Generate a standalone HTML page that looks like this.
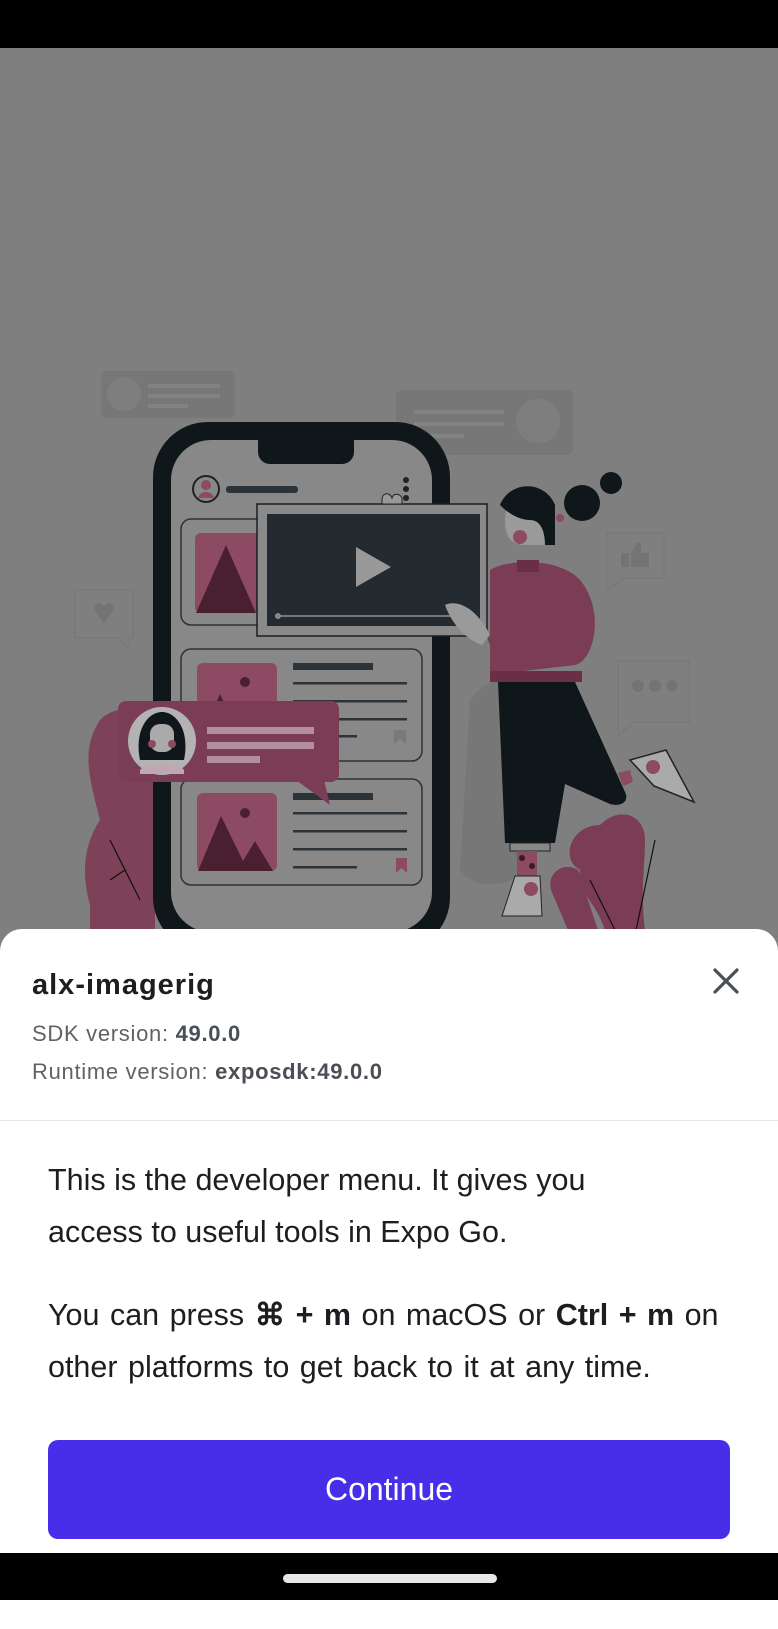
<!DOCTYPE html>
<html><head><meta charset="utf-8"><style>
*{margin:0;padding:0;box-sizing:border-box}
body{width:778px;height:1600px;position:relative;overflow:hidden;background:#7f7f7f;font-family:"Liberation Sans",Arial,sans-serif}
.top{position:absolute;left:0;top:0;width:778px;height:48px;background:#000}
svg.ill{position:absolute;left:0;top:0}
.sheet{position:absolute;left:0;top:929px;width:778px;height:700px;background:#fff;border-radius:22px 22px 0 0}
.title{position:absolute;left:32px;top:40px;font-size:29px;letter-spacing:1px;font-weight:bold;color:#1c1e21}
.sdk{position:absolute;left:32px;font-size:22px;letter-spacing:.7px;color:#5f6368}
.sdk b{color:#4a4e55}
.close{position:absolute;left:712px;top:38px}
.div{position:absolute;left:0;top:191px;width:778px;height:1px;background:#e4e6e9}
.p{position:absolute;left:48px;font-size:30.5px;line-height:52px;color:#1c1e21}
.btn{position:absolute;left:48px;top:511px;width:682px;height:99px;background:#482ee9;border-radius:10px;color:#fff;font-size:32px;text-align:center;line-height:99px}
.bot{position:absolute;left:0;top:1553px;width:778px;height:47px;background:#000}
.home{position:absolute;left:283px;top:1574px;width:214px;height:9px;border-radius:5px;background:#e6e6e6}
</style></head><body>
<div class="top"></div>
<svg class="ill" width="778" height="960" viewBox="0 0 778 960">
<rect x="101" y="371" width="134" height="47" rx="6" fill="#777"/>
<circle cx="124" cy="394" r="17" fill="#7e7e7e"/>
<rect x="148" y="384" width="72" height="4" fill="#838383"/><rect x="148" y="394" width="72" height="4" fill="#838383"/><rect x="148" y="404" width="40" height="4" fill="#838383"/>
<rect x="396" y="390" width="177" height="65" rx="6" fill="#777"/>
<circle cx="538" cy="421" r="22" fill="#7e7e7e"/>
<rect x="414" y="410" width="90" height="4" fill="#838383"/><rect x="414" y="422" width="90" height="4" fill="#838383"/><rect x="414" y="434" width="50" height="4" fill="#838383"/>
<path d="M75 590h58v48h-4v10l-10-10h-44z" fill="none" stroke="#7a7a7a" stroke-width="2"/>
<path d="M94 606c4-6 10-2 10 2c0-4 6-8 10-2c2 6-10 14-10 18c0-4-12-12-10-18z" fill="#747474"/>
<path d="M607 533h57v45h-40l-17 12z" fill="none" stroke="#7a7a7a" stroke-width="2"/>
<rect x="621" y="553" width="8" height="14" fill="#747474"/><path d="M631 567v-14l6-10h4v10h8v14z" fill="#747474"/>
<path d="M618 661h71v61h-55l-16 14z" fill="none" stroke="#7a7a7a" stroke-width="2"/>
<circle cx="638" cy="686" r="6" fill="#747474"/><circle cx="655" cy="686" r="6" fill="#747474"/><circle cx="672" cy="686" r="6" fill="#747474"/>
<path d="M470 700c30-40 70-20 70 20v120c0 40-60 60-80 30z" fill="#777"/>
<path d="M100 720c20-20 50-10 55 20v190h-55c-20-40-20-80 0-110c-10-40-20-70 0-100z" fill="#7d4258"/>
<path d="M90 860c10-25 40-20 50 0c10 20 20 60 10 80h-60z" fill="#7d4258"/>
<rect x="153" y="422" width="297" height="530" rx="55" fill="#0f171b"/>
<rect x="171" y="440" width="261" height="492" rx="40" fill="#888"/>
<rect x="258" y="430" width="96" height="34" rx="12" fill="#0f171b"/>
<circle cx="206" cy="489" r="13" fill="#888" stroke="#222" stroke-width="2"/>
<circle cx="206" cy="485" r="5" fill="#8c4a63"/><path d="M198 498c2-8 14-8 16 0z" fill="#8c4a63"/>
<rect x="226" y="486" width="72" height="7" rx="3" fill="#2b3338"/>
<circle cx="406" cy="480" r="3" fill="#222"/><circle cx="406" cy="489" r="3" fill="#222"/><circle cx="406" cy="498" r="3" fill="#222"/>
<rect x="181" y="519" width="241" height="106" rx="10" fill="none" stroke="#2b3338" stroke-width="1.5"/>
<rect x="195" y="533" width="90" height="80" rx="6" fill="#8c4a63"/>
<path d="M196 613l30-68l30 68z" fill="#4a2030"/>
<rect x="181" y="649" width="241" height="112" rx="10" fill="none" stroke="#2b3338" stroke-width="1.5"/>
<rect x="197" y="663" width="80" height="81" rx="6" fill="#8c4a63"/>
<path d="M198 744l22-50l24 50z" fill="#4a2030"/><circle cx="245" cy="682" r="5" fill="#4a2030"/>
<rect x="293" y="663" width="80" height="7" fill="#2b3338"/>
<rect x="293" y="682" width="114" height="2.5" fill="#2b3338"/><rect x="293" y="700" width="114" height="2.5" fill="#2b3338"/><rect x="293" y="718" width="114" height="2.5" fill="#2b3338"/><rect x="293" y="735" width="64" height="2.5" fill="#2b3338"/>
<path d="M394 730h12v14l-6-5l-6 5z" fill="#7a7a7a"/>
<rect x="181" y="779" width="241" height="106" rx="10" fill="none" stroke="#2b3338" stroke-width="1.5"/>
<rect x="197" y="793" width="80" height="78" rx="6" fill="#8c4a63"/>
<path d="M198 871l23-55l22 45l12-20l18 30z" fill="#4a2030"/><circle cx="245" cy="813" r="5" fill="#4a2030"/>
<rect x="293" y="793" width="80" height="7" fill="#2b3338"/>
<rect x="293" y="812" width="114" height="2.5" fill="#2b3338"/><rect x="293" y="830" width="114" height="2.5" fill="#2b3338"/><rect x="293" y="848" width="114" height="2.5" fill="#2b3338"/><rect x="293" y="866" width="64" height="2.5" fill="#2b3338"/>
<path d="M396 858h11v15l-5.5-5l-5.5 5z" fill="#8c4a63"/>
<rect x="118" y="701" width="221" height="81" rx="8" fill="#7b3d56"/>
<path d="M296 780l34 25l-6-25z" fill="#7b3d56"/>
<circle cx="162" cy="741" r="34" fill="#b3b3b3"/>
<path d="M140 760c-6-30 8-48 22-48s28 18 22 48z" fill="#0f171b"/>
<rect x="150" y="724" width="24" height="28" rx="10" fill="#aaa"/>
<circle cx="152" cy="744" r="4" fill="#8c4a63"/><circle cx="172" cy="744" r="4" fill="#8c4a63"/>
<path d="M140 770c6-8 38-8 44 0v4h-44z" fill="#c0a8b2"/>
<rect x="207" y="727" width="107" height="7" fill="#b58da0"/><rect x="207" y="742" width="107" height="7" fill="#b58da0"/><rect x="207" y="756" width="53" height="7" fill="#b58da0"/>
<rect x="257" y="504" width="230" height="132" fill="#8a8a8a" stroke="#1a1f22" stroke-width="1.5"/>
<rect x="267" y="514" width="213" height="112" fill="#232a30"/>
<path d="M356 547l35 20l-35 20z" fill="#999"/>
<rect x="277" y="615" width="178" height="2" fill="#777"/><circle cx="278" cy="616" r="3" fill="#888"/>
<path d="M382 500c0-8 8-8 10-2c2-6 8-4 10 0v6h-20z" fill="#999" stroke="#222" stroke-width="1"/>
<path d="M498 682h77l50 110c5 10-5 15-15 12l-45-20l-10 59h-50z" fill="#0f171b"/>
<rect x="510" y="843" width="40" height="8" fill="#888" stroke="#222"/>
<rect x="517" y="851" width="20" height="25" fill="#8c4a63"/>
<circle cx="522" cy="858" r="3" fill="#3a1a26"/><circle cx="532" cy="866" r="3" fill="#3a1a26"/>
<path d="M515 876h25l2 40h-40z" fill="#aaa" stroke="#222"/><circle cx="531" cy="889" r="7" fill="#8c4a63"/>
<path d="M618 773l12-3l3 12l-10 4z" fill="#8c4a63"/>
<path d="M630 760l36-10l28 52l-40-16z" fill="#aaa" stroke="#222" stroke-width="1.5"/><circle cx="653" cy="767" r="7" fill="#8c4a63"/>
<path d="M490 570c20-12 70-12 90 10c25 30 15 80-5 85l-85 10z" fill="#7b3d56"/>
<rect x="490" y="671" width="92" height="11" fill="#6a2e46"/>
<rect x="517" y="560" width="22" height="12" fill="#6a2e46"/>
<path d="M486 635l30-15l10 20l-30 20z" fill="#7b3d56"/>
<path d="M445 605c10-5 30 0 45 30l-8 10c-15-5-30-20-37-40z" fill="#9a9a9a"/>
<path d="M505 520c0-15 10-25 25-25s25 15 25 30v20h-30c-15 0-20-10-20-25z" fill="#9a9a9a"/>
<path d="M500 505c10-25 45-25 55 0v40h-10c0-15-5-25-15-25c-10 0-20-5-30-15z" fill="#0f171b"/>
<circle cx="520" cy="537" r="7" fill="#8c4a63"/>
<circle cx="582" cy="503" r="18" fill="#0f171b"/><circle cx="611" cy="483" r="11" fill="#0f171b"/>
<circle cx="560" cy="518" r="4" fill="#8c4a63"/>
<path d="M600 825c20-20 45-10 45 15c0 30-5 50 0 90h-40c-10-30-30-40-25-60c-20-10-10-45 20-45z" fill="#7b3d56"/>
<path d="M578 870c-15-10-35 5-25 25l15 35h30z" fill="#7b3d56"/>
<path d="M655 840l-20 95M590 880l25 50" stroke="#111" stroke-width="1.2" fill="none"/>
<path d="M110 840l30 60M125 870l-15 10" stroke="#111" stroke-width="1.2" fill="none"/>
</svg>
<div class="sheet">
<div class="title">alx-imagerig</div>
<div class="sdk" style="top:92px">SDK version: <b>49.0.0</b></div>
<div class="sdk" style="top:130px">Runtime version: <b>exposdk:49.0.0</b></div>
<svg class="close" width="28" height="28" viewBox="0 0 28 28"><path d="M3 3L25 25M25 3L3 25" stroke="#4a4e55" stroke-width="3.2" stroke-linecap="round"/></svg>
<div class="div"></div>
<div class="p" style="top:225px;width:600px">This is the developer menu. It gives you access to useful tools in Expo Go.</div>
<div class="p" style="top:360px;width:700px;word-spacing:2px">You can press <b>⌘ + m</b> on macOS or <b>Ctrl + m</b> on other platforms to get back to it at any time.</div>
<div class="btn">Continue</div>
</div>
<div class="bot"></div>
<div class="home"></div>
</body></html>
